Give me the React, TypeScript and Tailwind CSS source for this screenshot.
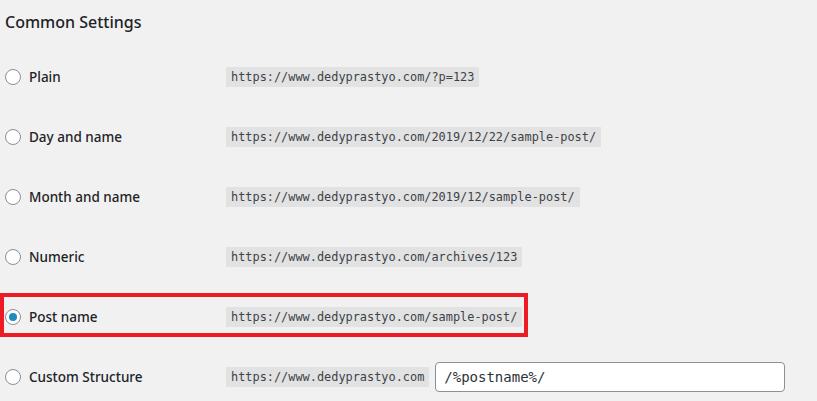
const BASE = 'https://www.dedyprastyo.com'

const OPTIONS = [
  { label: 'Plain', example: `${BASE}/?p=123` },
  { label: 'Day and name', example: `${BASE}/2019/12/22/sample-post/` },
  { label: 'Month and name', example: `${BASE}/2019/12/sample-post/` },
  { label: 'Numeric', example: `${BASE}/archives/123` },
  { label: 'Post name', example: `${BASE}/sample-post/`, checked: true },
]

function Radio({ checked }: { checked?: boolean }) {
  return (
    <span className="flex h-4 w-4 shrink-0 items-center justify-center rounded-full border border-[#8c8f94] bg-white">
      {checked && <span className="h-2 w-2 rounded-full bg-[#1e8cbe]" />}
    </span>
  )
}

function Code({ children }: { children: string }) {
  return (
    <code className="bg-[#e2e2e2] px-[5px] text-[11.9px] leading-[20px] text-[#3c434a] [font-family:'DejaVu_Sans_Mono',monospace]">
      {children}
    </code>
  )
}

export default function App() {
  return (
    <div className="h-[401px] w-[817px] overflow-hidden bg-[#f1f1f1] pl-[5px] [font-family:'Noto_Sans',sans-serif]">
      <h2 className="flex h-[47px] items-center pb-[3px] text-[16px] font-medium text-[#1d2327]">
        Common Settings
      </h2>

      <div className="flex flex-col">
        {OPTIONS.map((opt) => (
          <div key={opt.label} className="relative flex h-[60px] items-center">
            <div className="flex w-[221px] items-center gap-2">
              <Radio checked={opt.checked} />
              <span className="text-[13.5px] font-medium text-[#1d2327]">{opt.label}</span>
            </div>
            <Code>{opt.example}</Code>
            {opt.checked && (
              <div className="pointer-events-none absolute left-[-5px] top-[6px] h-[44px] w-[528px] border-4 border-[#ed1c24]" />
            )}
          </div>
        ))}

        <div className="flex h-[60px] items-center">
          <div className="flex w-[221px] items-center gap-2">
            <Radio />
            <span className="text-[13.5px] font-medium text-[#1d2327]">Custom Structure</span>
          </div>
          <Code>{BASE}</Code>
          <input
            readOnly
            value="/%postname%/"
            className="ml-[6px] h-[30px] w-[350px] rounded-[4px] border border-[#8c8f94] bg-white px-2 text-[14px] text-[#2c3338] [font-family:'DejaVu_Sans_Mono',monospace] outline-none"
          />
        </div>
      </div>
    </div>
  )
}
